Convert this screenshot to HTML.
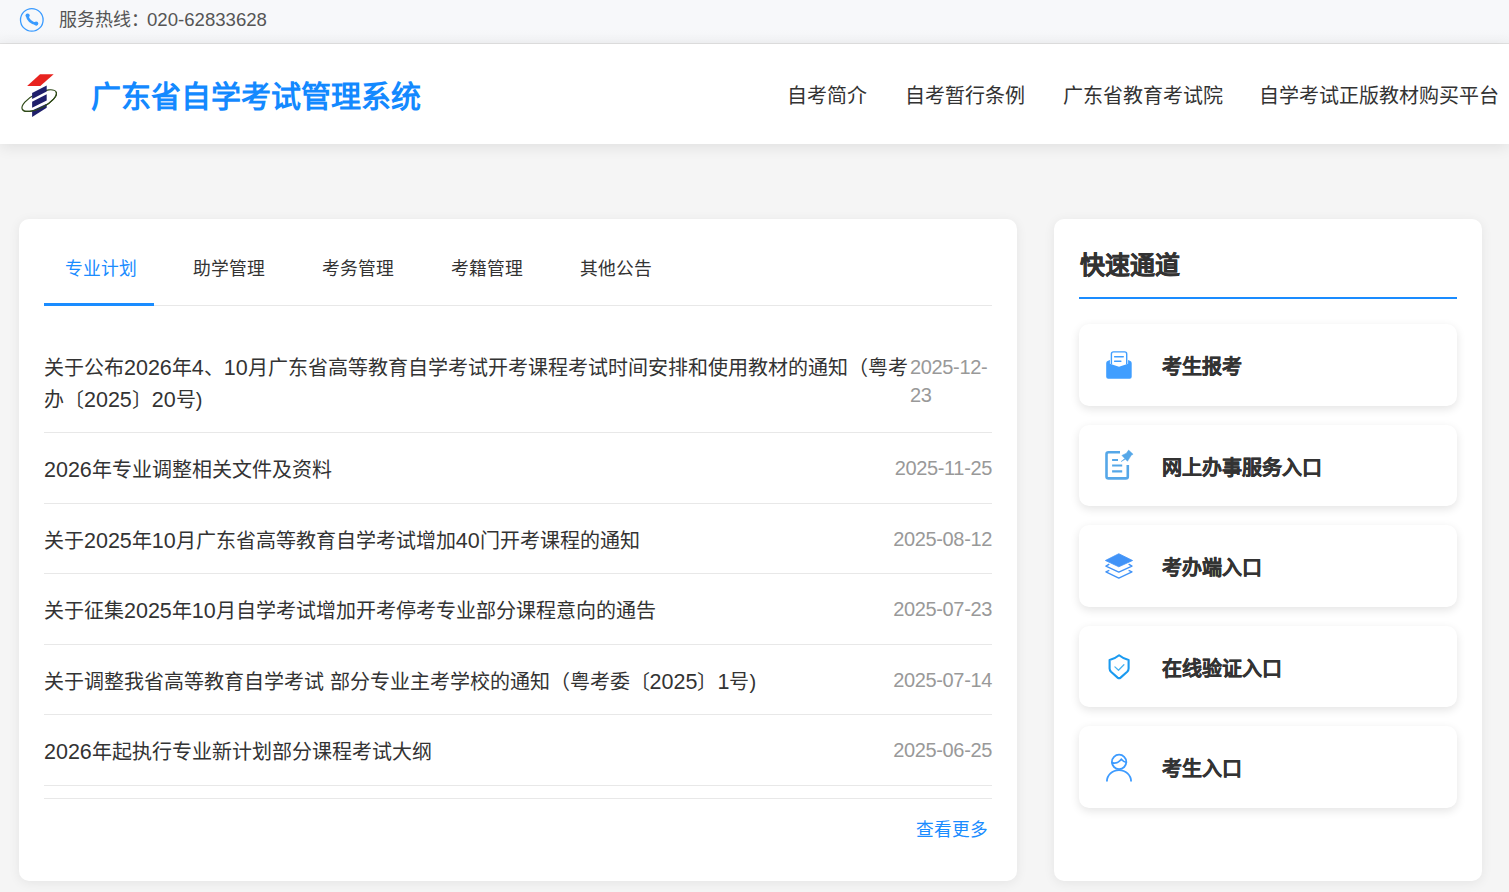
<!DOCTYPE html>
<html lang="zh-CN">
<head>
<meta charset="utf-8">
<style>
*{margin:0;padding:0;box-sizing:border-box;}
html,body{width:1509px;height:892px;overflow:hidden;}
body{background:#f5f5f5;font-family:"Liberation Sans",sans-serif;color:#333;position:relative;}
.topbar{position:absolute;left:0;top:0;width:1509px;height:44px;background:linear-gradient(#f7f8fa 0,#f7f8fa 30px,#f3f4f6 42px);border-bottom:1px solid #e2e2e2;}
.hotline i{font-style:normal;font-size:18.6px;margin-left:-2px;}
.hotline{position:absolute;left:59px;top:7px;font-size:18px;line-height:26px;color:#555;white-space:nowrap;}
.header{position:absolute;left:0;top:44px;width:1509px;height:100px;background:#fff;box-shadow:0 3px 14px rgba(0,0,0,0.09);}
.title{position:absolute;left:91px;top:31px;font-size:30px;line-height:44px;font-weight:bold;color:#1389ff;white-space:nowrap;}
.nav{position:absolute;top:38px;font-size:20px;line-height:28px;color:#333;white-space:nowrap;}
.card{position:absolute;background:#fff;border-radius:10px;box-shadow:0 2px 12px rgba(0,0,0,0.07);}
.left{left:19px;top:219px;width:998px;height:662px;}
.right{left:1054px;top:219px;width:428px;height:662px;}
.tabs{position:absolute;left:25px;top:0;width:948px;height:87px;border-bottom:1px solid #e8e8e8;}
.tab{position:absolute;top:37px;font-size:17.8px;line-height:26px;color:#333;white-space:nowrap;}
.tab.active{color:#1a8cff;}
.tabline{position:absolute;left:0;top:84px;width:110px;height:3px;background:#1a8cff;}
.row{position:absolute;left:25px;width:948px;border-bottom:1px solid #e8e8e8;}
.rt{position:absolute;left:0;font-size:20px;line-height:31px;color:#333;white-space:nowrap;}
.rt i{font-style:normal;font-size:21.5px;}
.rd{position:absolute;right:0;font-size:20px;letter-spacing:-0.35px;line-height:28px;color:#999;white-space:nowrap;}
.more{position:absolute;left:897px;top:598px;font-size:17.7px;line-height:26px;color:#1a8cff;white-space:nowrap;}
.qt{position:absolute;left:26px;top:28px;font-size:25px;line-height:36px;font-weight:bold;color:#333;-webkit-text-stroke:0.35px #333;}
.qline{position:absolute;left:25px;top:78px;width:378px;height:2px;background:#1a8cff;}
.item{position:absolute;left:25px;width:378px;height:81.6px;background:#fff;border-radius:10px;box-shadow:0 3px 10px rgba(0,0,0,0.11);}
.item span{position:absolute;left:83px;top:29px;font-size:20px;line-height:28px;font-weight:bold;color:#333;-webkit-text-stroke:0.35px #333;white-space:nowrap;}
svg.ov{position:absolute;left:0;top:0;}
</style>
</head>
<body>
<div class="topbar">
  <div class="hotline">服务热线：<i>020-62833628</i></div>
</div>
<div class="header">
  <div class="title">广东省自学考试管理系统</div>
  <div class="nav" style="left:787px">自考简介</div>
  <div class="nav" style="left:905px">自考暂行条例</div>
  <div class="nav" style="left:1063px">广东省教育考试院</div>
  <div class="nav" style="left:1259px">自学考试正版教材购买平台</div>
</div>

<div class="card left">
  <div class="tabs">
    <div class="tab active" style="left:21px">专业计划</div>
    <div class="tab" style="left:149px">助学管理</div>
    <div class="tab" style="left:278px">考务管理</div>
    <div class="tab" style="left:407px">考籍管理</div>
    <div class="tab" style="left:536px">其他公告</div>
    <div class="tabline"></div>
  </div>
  <div class="row" style="top:108px;height:106px">
    <div class="rt" style="top:25px;line-height:32px;white-space:normal;width:866px;">关于公布<i>2026</i>年<i>4</i>、<i>10</i>月广东省高等教育自学考试开考课程考试时间安排和使用教材的通知（粤考办〔<i>2025</i>〕<i>20</i>号)</div>
    <div class="rd" style="top:26px;width:82px;white-space:normal;text-align:left;">2025-12-23</div>
  </div>
  <div class="row" style="top:214px;height:71px"><div class="rt" style="top:22px"><i>2026</i>年专业调整相关文件及资料</div><div class="rd" style="top:21px">2025-11-25</div></div>
  <div class="row" style="top:285px;height:70px"><div class="rt" style="top:22px">关于<i>2025</i>年<i>10</i>月广东省高等教育自学考试增加<i>40</i>门开考课程的通知</div><div class="rd" style="top:21px">2025-08-12</div></div>
  <div class="row" style="top:355px;height:71px"><div class="rt" style="top:22px">关于征集<i>2025</i>年<i>10</i>月自学考试增加开考停考专业部分课程意向的通告</div><div class="rd" style="top:21px">2025-07-23</div></div>
  <div class="row" style="top:426px;height:70px"><div class="rt" style="top:22px">关于调整我省高等教育自学考试 部分专业主考学校的通知（粤考委〔<i>2025</i>〕<i>1</i>号)</div><div class="rd" style="top:21px">2025-07-14</div></div>
  <div class="row" style="top:496px;height:71px"><div class="rt" style="top:22px"><i>2026</i>年起执行专业新计划部分课程考试大纲</div><div class="rd" style="top:21px">2025-06-25</div></div>
  <div class="row" style="top:567px;height:13px"></div>
  <div class="more">查看更多</div>
</div>

<div class="card right">
  <div class="qt">快速通道</div>
  <div class="qline"></div>
  <div class="item" style="top:105px"><span>考生报考</span></div>
  <div class="item" style="top:205.6px"><span>网上办事服务入口</span></div>
  <div class="item" style="top:306.2px"><span>考办端入口</span></div>
  <div class="item" style="top:406.8px"><span>在线验证入口</span></div>
  <div class="item" style="top:507.4px"><span>考生入口</span></div>
</div>

<svg class="ov" width="1509" height="892" viewBox="0 0 1509 892">
  <!-- phone -->
  <circle cx="31.8" cy="19.9" r="11.3" fill="none" stroke="#3a9bff" stroke-width="1.3"/>
  <path d="M27.3 15.6C27.6 19.6 31.2 23.3 36.4 23.8" fill="none" stroke="#3a9bff" stroke-width="2.7" stroke-linecap="round"/>
  <circle cx="27.6" cy="15.5" r="2.1" fill="#3a9bff"/>
  <circle cx="36.2" cy="23.6" r="2.1" fill="#3a9bff"/>
  <!-- logo -->
  <polygon points="27.1,86 40,74.3 53.7,74.3 40.3,86" fill="#e8231f"/>
  <ellipse cx="39.2" cy="100.6" rx="19" ry="7.4" transform="rotate(-27 39.2 100.6)" fill="none" stroke="#2f4a18" stroke-width="1.2"/>
  <polygon points="32.1,93 46.7,85.4 46.7,91.4 32.1,99" fill="#1f1f6b"/>
  <polygon points="32.1,101.7 46.7,94.2 46.7,100.6 32.1,107.7" fill="#1f1f6b"/>
  <polygon points="32.1,110.5 46.7,103.7 46.7,107.7 32.1,116.9" fill="#1f1f6b"/>
  
  <g transform="translate(39.2 100.6) rotate(-27)"><path d="M-19 0A19 7.4 0 0 0 19 0" fill="none" stroke="#2f4a18" stroke-width="1.2"/></g>
  <!-- envelope -->
  <path d="M1106.2 363.2Q1106.2 361.6 1107.6 361L1111.5 359.3H1126.5L1130.3 361Q1131.7 361.6 1131.7 363.2V376.7Q1131.7 378.7 1129.7 378.7H1108.2Q1106.2 378.7 1106.2 376.7Z" fill="#409eff"/>
  <path d="M1109.9 358V363.8L1119 366.8L1128.1 363.8V358Z" fill="#fff"/>
  <path d="M1111.4 364.3V354Q1111.4 351.9 1113.5 351.9H1124.6Q1126.7 351.9 1126.7 354V364.3" fill="none" stroke="#409eff" stroke-width="1.4"/>
  <path d="M1114.6 356.8H1123.3M1114.6 361.3H1120.9" stroke="#409eff" stroke-width="1.4" stroke-linecap="round"/>
  <!-- doc -->
  <path d="M1120 452.2H1108.5Q1106.5 452.2 1106.5 454.2V476.4Q1106.5 478.4 1108.5 478.4H1125.8Q1127.8 478.4 1127.8 476.4V465" fill="none" stroke="#55a7e8" stroke-width="2.6"/>
  <path d="M1112.1 460H1118M1112.1 465.5H1122.2M1112.1 471.4H1122.2" stroke="#55a7e8" stroke-width="2.2"/>
  <path d="M1121.1 461.6L1124.8 458.5L1121.9 455.4L1126.4 453.2L1128.6 450.1L1133.1 454.3L1131.4 455.1L1127.5 461.3L1125.4 459.2Z" fill="#55a7e8" stroke="#55a7e8" stroke-width="0.5" stroke-linejoin="round"/>
  <!-- layers -->
  <path d="M1105.4 560.5L1118.8 553.7L1132.6 560.5L1118.8 566.8Z" fill="#4193f7" stroke="#4193f7" stroke-width="0.8" stroke-linejoin="round"/>
  <path d="M1109.3 564.1L1105.9 566.1L1118.8 572.2L1132 566.1L1128.6 564.1" fill="none" stroke="#4193f7" stroke-width="1.3" stroke-linejoin="round"/>
  <path d="M1109.3 570.3L1105.9 571.8L1118.8 578.1L1132 571.8L1128.6 570.3" fill="none" stroke="#4193f7" stroke-width="1.3" stroke-linejoin="round"/>
  <!-- shield -->
  <path d="M1119.1 655.3Q1114.5 659 1109.6 660.1V668.6Q1109.6 670.4 1111 671.8L1117.6 677.6Q1119.1 678.8 1120.6 677.6L1127.2 671.8Q1128.6 670.4 1128.6 668.6V660.1Q1123.7 659 1119.1 655.3Z" fill="none" stroke="#1a9af0" stroke-width="2.1" stroke-linejoin="round"/>
  <path d="M1114.9 666.9L1118.5 670.3L1123.9 664.7" fill="none" stroke="#4ab3f0" stroke-width="1.3" stroke-linecap="round" stroke-linejoin="round"/>
  <!-- person -->
  <circle cx="1119.1" cy="761.9" r="7.2" fill="none" stroke="#3d9bff" stroke-width="1.8"/>
  <path d="M1111.5 762.6Q1117 764.6 1121.3 759.3Q1123.5 762 1126.7 762.5" fill="none" stroke="#3d9bff" stroke-width="1.7"/>
  <path d="M1106.9 781.5A12.1 11.4 0 0 1 1131.1 781.5" fill="none" stroke="#3d9bff" stroke-width="1.8"/>
</svg>
</body>
</html>
